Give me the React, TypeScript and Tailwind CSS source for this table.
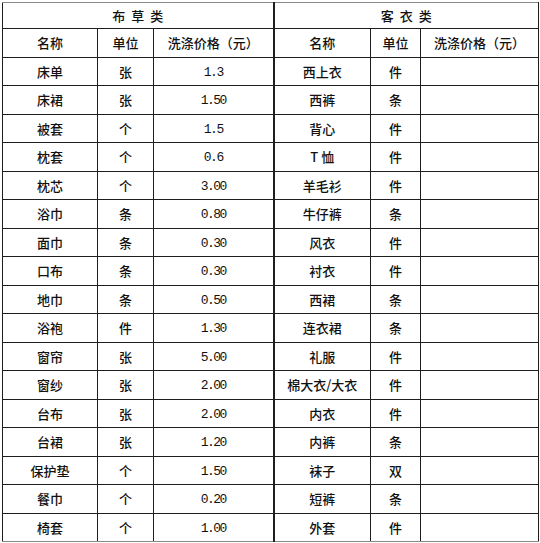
const LINEN: [string, string, string][] = [
  ["床单", "张", "1.3"],
  ["床裙", "张", "1.50"],
  ["被套", "个", "1.5"],
  ["枕套", "个", "0.6"],
  ["枕芯", "个", "3.00"],
  ["浴巾", "条", "0.80"],
  ["面巾", "条", "0.30"],
  ["口布", "条", "0.30"],
  ["地巾", "条", "0.50"],
  ["浴袍", "件", "1.30"],
  ["窗帘", "张", "5.00"],
  ["窗纱", "张", "2.00"],
  ["台布", "张", "2.00"],
  ["台裙", "张", "1.20"],
  ["保护垫", "个", "1.50"],
  ["餐巾", "个", "0.20"],
  ["椅套", "个", "1.00"],
];

const GUEST: [string, string][] = [
  ["西上衣", "件"],
  ["西裤", "条"],
  ["背心", "件"],
  ["T 恤", "件"],
  ["羊毛衫", "件"],
  ["牛仔裤", "条"],
  ["风衣", "件"],
  ["衬衣", "件"],
  ["西裙", "条"],
  ["连衣裙", "条"],
  ["礼服", "件"],
  ["棉大衣/大衣", "件"],
  ["内衣", "件"],
  ["内裤", "条"],
  ["袜子", "双"],
  ["短裤", "条"],
  ["外套", "件"],
];

const cell = "border border-[#1e1e1e] text-center align-middle p-0";
const num = "font-['Liberation_Mono',monospace] text-[13px] tracking-[-1.5px]";

export default function App() {
  return (
    <div className="w-[540px] h-[543px] bg-white pt-[2px] pl-[2px] font-['Noto_Sans_CJK_SC','Noto_Sans',sans-serif] text-[13px] font-medium text-[#111]">
      <table className="table-fixed border-collapse w-[536px]">
        <colgroup>
          <col className="w-[95px]" />
          <col className="w-[56px]" />
          <col className="w-[120px]" />
          <col className="w-[97px]" />
          <col className="w-[50px]" />
          <col className="w-[118px]" />
        </colgroup>
        <tbody>
          <tr className="h-[26px]">
            <td colSpan={3} className={`${cell} border-t-[#8a8a8a] border-r-2`}>
              <span className="tracking-[6px] pl-[6px]">布草类</span>
            </td>
            <td colSpan={3} className={`${cell} border-t-[#8a8a8a]`}>
              <span className="tracking-[6px] pl-[6px]">客衣类</span>
            </td>
          </tr>
          <tr className="h-[28.5px]">
            <td className={cell}>名称</td>
            <td className={cell}>单位</td>
            <td className={`${cell} border-r-2`}>洗涤价格（元）</td>
            <td className={cell}>名称</td>
            <td className={cell}>单位</td>
            <td className={cell}>洗涤价格（元）</td>
          </tr>
          {LINEN.map((l, i) => {
            const g = GUEST[i];
            const last = i === LINEN.length - 1;
            const b = last ? "border-b-[#8a8a8a]" : "";
            return (
              <tr key={l[0]} className="h-[28.5px]">
                <td className={`${cell} ${b}`}>{l[0]}</td>
                <td className={`${cell} ${b}`}>{l[1]}</td>
                <td className={`${cell} ${b} border-r-2`}>
                  <span className={num}>{l[2]}</span>
                </td>
                <td className={`${cell} ${b}`}>{g[0]}</td>
                <td className={`${cell} ${b}`}>{g[1]}</td>
                <td className={`${cell} ${b}`}></td>
              </tr>
            );
          })}
        </tbody>
      </table>
    </div>
  );
}
